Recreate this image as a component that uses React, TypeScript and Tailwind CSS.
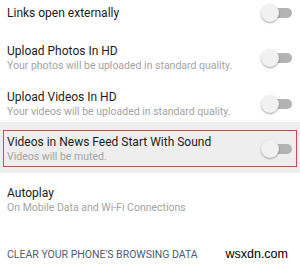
import React from 'react';

function Toggle() {
  return (
    <div className="relative w-[31px] h-[18px] shrink-0">
      <div className="absolute left-[5px] top-[4px] w-[26px] h-[10px] rounded-full bg-[#b3b3b3]" />
      <div className="absolute left-0 top-0 w-[18px] h-[18px] rounded-full bg-[#f1f1f1] shadow-[0_1px_2px_rgba(0,0,0,0.35)]" />
    </div>
  );
}

const title = 'text-[12px] leading-[16px] text-[#1c1c1c]';
const sub = 'text-[10.5px] leading-[14px] text-[#a3a3a3]';

export default function App() {
  return (
    <div
      className="w-[300px] h-[264px] bg-white overflow-hidden"
      style={{ fontFamily: 'Roboto, "Liberation Sans", sans-serif' }}
    >
      {/* Links open externally */}
      <div className="flex items-center justify-between h-[25px] pl-[7px] pr-[8px]">
        <span className={title}>Links open externally</span>
        <Toggle />
      </div>

      {/* Upload Photos */}
      <div className="flex items-center justify-between mt-[18px] pl-[7px] pr-[8px]">
        <div>
          <div className={title}>Upload Photos In HD</div>
          <div className={sub}>Your photos will be uploaded in standard quality.</div>
        </div>
        <Toggle />
      </div>

      {/* Upload Videos */}
      <div className="flex items-center justify-between mt-[16px] pl-[7px] pr-[8px]">
        <div>
          <div className={title}>Upload Videos In HD</div>
          <div className={sub}>Your videos will be uploaded in standard quality.</div>
        </div>
        <Toggle />
      </div>

      {/* Highlighted row */}
      <div className="mt-[3px] bg-[#eeeeee] pt-[8px] pb-[6px] px-[3px]">
        <div className="flex items-center justify-between border border-[#d9444f] pl-[3px] pr-[4px] pt-[3px] pb-[2px]">
          <div>
            <div className={title}>Videos in News Feed Start With Sound</div>
            <div className={sub}>Videos will be muted.</div>
          </div>
          <Toggle />
        </div>
      </div>

      {/* Autoplay */}
      <div className="mt-[12px] pl-[7px]">
        <div className={title}>Autoplay</div>
        <div className={sub}>On Mobile Data and Wi-Fi Connections</div>
      </div>

      {/* Clear browsing data */}
      <div className="flex items-center justify-between mt-[32px] pl-[7px] pr-[12px]">
        <span className="text-[10.5px] leading-[15px] text-[#4e5b73]">
          CLEAR YOUR PHONE'S BROWSING DATA
        </span>
        <span
          className="text-[12.5px] leading-[15px] text-black"
          style={{ fontFamily: '"Liberation Sans", Arial, sans-serif' }}
        >
          wsxdn.com
        </span>
      </div>
    </div>
  );
}
